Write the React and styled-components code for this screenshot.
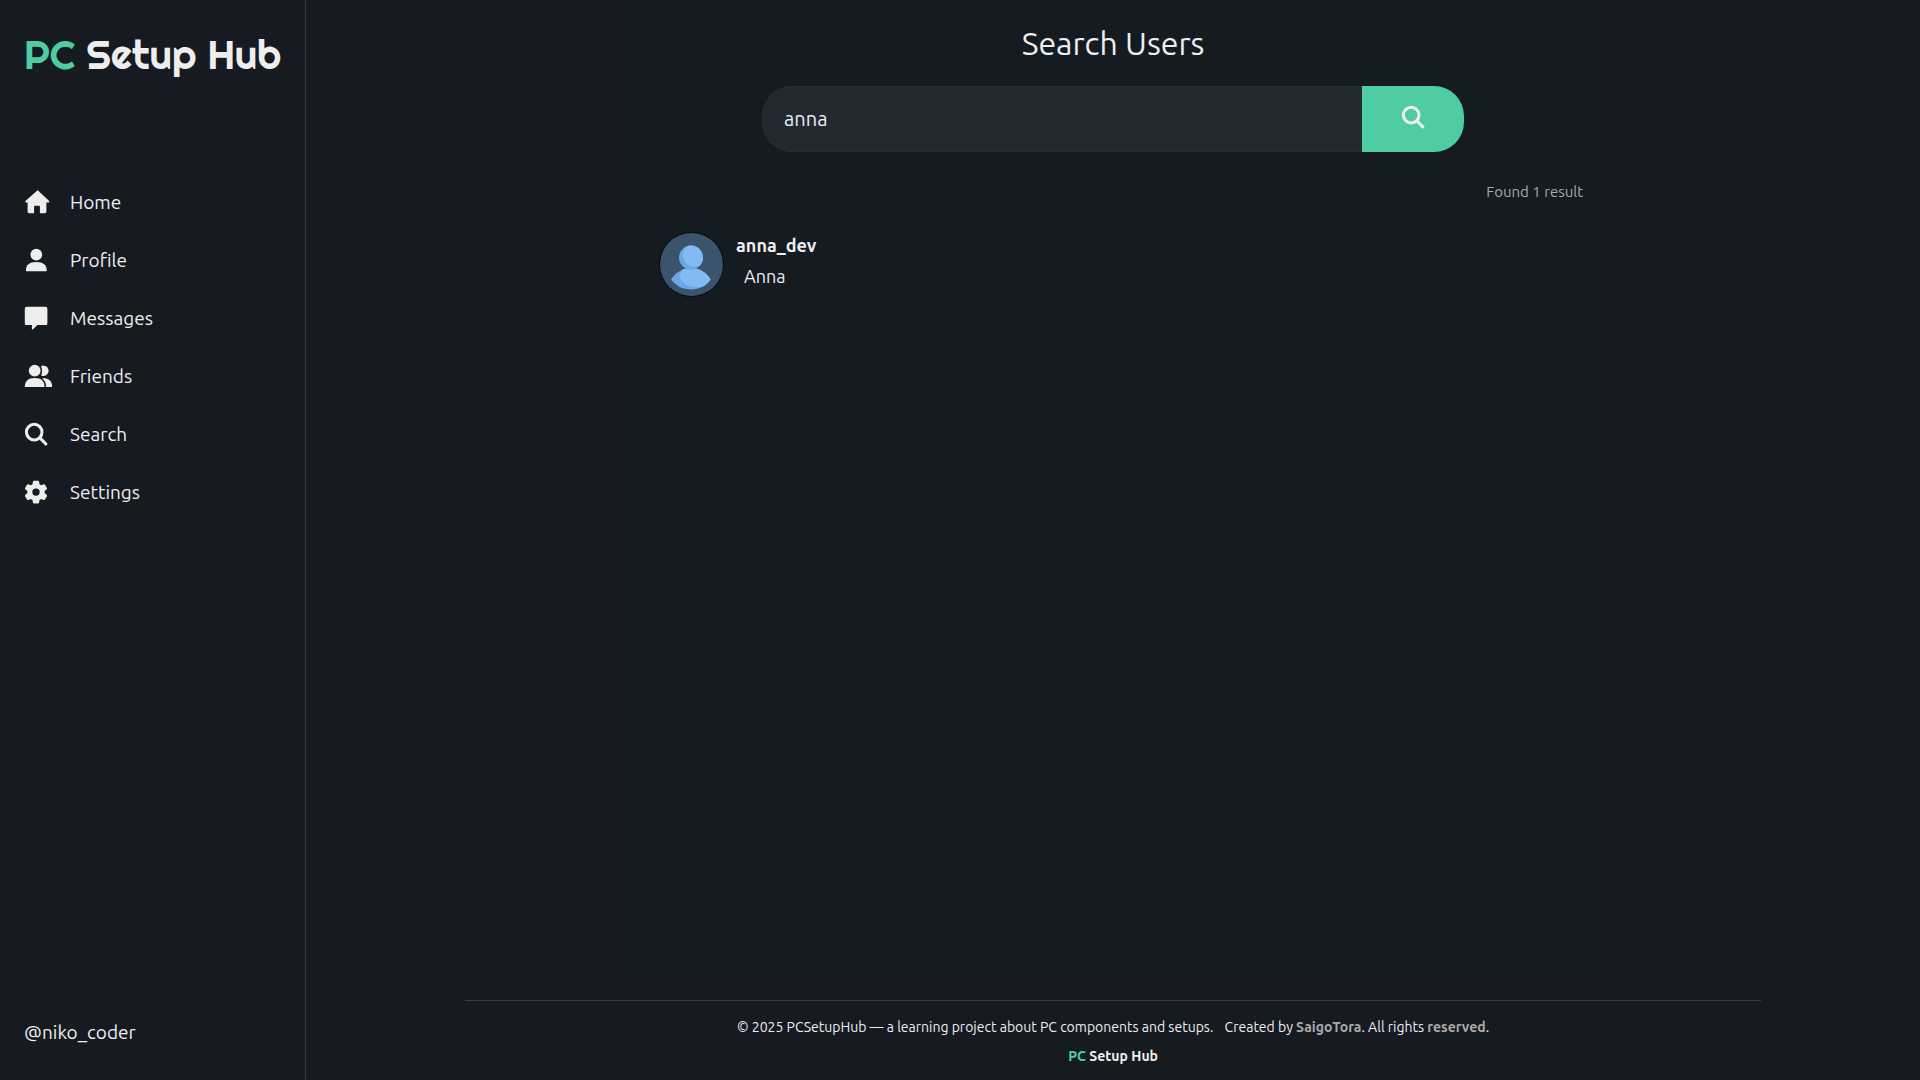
import React from 'react';
import styled, { createGlobalStyle } from 'styled-components';

const accent = '#4ecca3';
const text = '#eeeeee';
const line = '#393e46';
const muted = '#aaaaaa';

const GlobalStyle = createGlobalStyle`
  *, *::before, *::after { box-sizing: border-box; }
  body {
    margin: 0;
    background: #161a21;
    color: ${text};
    font-family: Ubuntu, "Noto Sans", "Open Sans", sans-serif;
    font-size: 19px;
    line-height: 24px;
  }
  a { color: inherit; text-decoration: none; }
  h1, p, ul { margin: 0; padding: 0; }
`;

const Page = styled.div`
  display: flex;
  min-height: 100vh;
`;

const Sidebar = styled.aside`
  display: flex;
  flex-direction: column;
  flex: 0 0 306px;
  padding: 25px 24px 36px;
  border-right: 1px solid ${line};
`;

const Logo = styled.a`
  font-family: Righteous, Lato, sans-serif;
  font-size: 40px;
  font-weight: 400;
  line-height: 60px;
  white-space: nowrap;
`;

const Accent = styled.span`
  color: ${accent};
`;

const NavList = styled.ul`
  display: flex;
  flex-direction: column;
  margin-top: 88px;
  list-style: none;
`;

const NavLink = styled.a`
  display: grid;
  grid-template-columns: 30px 1fr;
  column-gap: 16px;
  align-items: center;
  height: 58px;
`;

const Icon = styled.svg`
  display: block;
  width: 28px;
  height: 24px;
  fill: currentColor;
`;

const SearchGlyph = styled(Icon)`
  width: 24px;
`;

const Account = styled.a`
  margin-top: auto;
`;

const Content = styled.div`
  display: flex;
  flex: 1;
  flex-direction: column;
  align-items: center;
  min-width: 0;
  padding: 0 24px;
`;

const Panel = styled.main`
  display: flex;
  flex: 1;
  flex-direction: column;
  width: 100%;
  max-width: 972px;
  padding: 23px 16px;
  background: #141c22;
`;

const Title = styled.h1`
  font-size: 32px;
  font-weight: 400;
  line-height: 40px;
  text-align: center;
`;

const SearchForm = styled.form`
  display: flex;
  align-self: center;
  width: 100%;
  max-width: 702px;
  height: 66px;
  margin-top: 23px;
`;

const SearchInput = styled.input`
  flex: 1;
  min-width: 0;
  padding: 0 21px;
  border: 1px solid #292d35;
  border-right: 0;
  border-radius: 30px 0 0 30px;
  outline: 0;
  background: #232931;
  color: inherit;
  font: inherit;
  font-size: 20px;
`;

const SearchButton = styled.button`
  display: flex;
  align-items: center;
  justify-content: center;
  width: 102px;
  padding: 0 0 4px;
  border: 0;
  border-radius: 0 30px 30px 0;
  background: ${accent};
  color: ${text};
`;

const ResultCount = styled.p`
  margin-top: 28px;
  color: ${muted};
  font-size: 15px;
  text-align: right;
`;

const UserCard = styled.a`
  display: flex;
  gap: 12px;
  margin-top: 28px;
  padding: 0 16px;
`;

const Avatar = styled.svg`
  width: 65px;
  height: 65px;
`;

const UserText = styled.div`
  display: flex;
  flex-direction: column;
  gap: 7px;
  padding-top: 1px;
  font-size: 18px;
`;

const UserName = styled.strong`
  font-weight: 700;
`;

const FullName = styled.span`
  padding-left: 8px;
`;

const Footer = styled.footer`
  width: 100%;
  max-width: 1296px;
  margin-top: 24px;
  padding: 14px 0 12px;
  border-top: 1px solid ${line};
  font-size: 14px;
  text-align: center;
`;

const FooterLine = styled.p`
  padding-bottom: 5px;
`;

const Credit = styled.span`
  margin-left: 8px;
`;

const FooterLink = styled.a`
  color: ${muted};
  font-weight: 700;
`;

const FooterBrand = styled.a`
  font-weight: 700;
`;

const shapes = {
  home: (
    <path d="M14.3.7c-.4-.3-.9-.3-1.3 0L1.700 10.800c-.8.8-.4 1.800.7 1.800h1.200v9c0 1.100.6 1.700 1.600 1.700h4.900v-6.500c0-.7.4-1.100 1.100-1.100h3.600c.7 0 1.100.4 1.100 1.100v6.500h4.900c1 0 1.600-.6 1.600-1.700v-9h1.800c1.100 0 1.500-1 .7-1.800z" />
  ),
  profile: (
    <>
      <circle cx="12.300" cy="6.600" r="5.900" />
      <path d="M2.300 23.200c-.3 0-.4-.2-.4-.6 0-5.600 3.400-8.500 10.400-8.500s10.400 2.900 10.400 8.500c0 .4-.1.6-.4.600z" />
    </>
  ),
  messages: (
    <path d="M3 .8h18.200c1.500 0 2.200.7 2.200 2.200v13.900c0 1.500-.7 2.200-2.200 2.200H13.500l-4.800 4.300c-.5.300-.8.100-.8-.4v-3.900H3c-1.500 0-2.200-.7-2.200-2.200V3C.8 1.500 1.500.8 3 .8z" />
  ),
  friends: (
    <>
      <circle cx="10.700" cy="6.600" r="5.900" />
      <path d="M.8 23.100c0-5.900 3.200-9.100 9.900-9.100s9.900 3.200 9.900 9.100z" />
      <path d="M17 2.200a5.200 5.200 0 1 1 .1 9.300c1.300-2.800 1.300-6.500-.1-9.300z" />
      <path d="M18.200 14.400c6.200-.7 10 2.500 10 8.700h-6.100c0-3.700-1-6.700-3.900-8.700z" />
    </>
  ),
  search: (
    <path
      d="M10.200 2.300a7.800 7.800 0 1 0 0 15.600 7.800 7.800 0 0 0 0-15.600zM15.900 15.900l5.900 6"
      fill="none"
      stroke="currentColor"
      strokeWidth="3"
      strokeLinecap="round"
    />
  ),
  settings: (
    <path
      fillRule="evenodd"
      d="M10 .7h4c.6 0 1 .4 1.100 1l.4 2.500 1.700 1 2.400-.9c.6-.2 1.100 0 1.400.5l1.900 3.300c.3.500.2 1.100-.3 1.500l-2 1.500v2l2 1.600c.5.400.6 1 .3 1.500L21 19.400c-.3.500-.8.700-1.400.5l-2.400-.9-1.700 1-.4 2.500c-.1.600-.5.900-1.100.9h-4c-.6 0-1-.3-1.100-.9L8.500 20l-1.700-1-2.400.9c-.6.200-1.100 0-1.400-.5l-1.900-3.200c-.3-.5-.2-1.100.3-1.500l2-1.600v-2l-2-1.500c-.5-.4-.6-1-.3-1.500L3 4.800c.3-.5.8-.7 1.400-.5l2.400.9 1.700-1L8.900 1.700c.1-.6.5-1 1.100-1zM12 8.400a3.700 3.700 0 1 0 0 7.400 3.700 3.700 0 0 0 0-7.400z"
    />
  ),
};

function Glyph({ name }) {
  return (
    <Icon viewBox="0 0 28 24" aria-hidden="true">
      {shapes[name]}
    </Icon>
  );
}

function Portrait() {
  const body = 'M12 47.500C16.500 40.500 23.500 36 32 36s15.500 4.500 19.700 11.500C47 54 40.500 57.500 32 57.500S17 54 12 47.500z';
  return (
    <Avatar viewBox="0 0 65 65" aria-hidden="true">
      <defs>
        <clipPath id="bodyClip"><path d={body} /></clipPath>
        <clipPath id="headClip"><circle cx="32" cy="25.500" r="12" /></clipPath>
      </defs>
      <circle cx="32.500" cy="32.500" r="32" fill="#3b536b" stroke="#05080c" strokeWidth="1" />
      <path d={body} fill="#6ba7e5" />
      <ellipse cx="38" cy="43.500" rx="17" ry="11.500" fill="#82baf3" clipPath="url(#bodyClip)" />
      <circle cx="32" cy="25.500" r="12" fill="#6ba7e5" />
      <circle cx="36" cy="23" r="12" fill="#82baf3" clipPath="url(#headClip)" />
    </Avatar>
  );
}

const links = [
  ['home', 'Home'],
  ['profile', 'Profile'],
  ['messages', 'Messages'],
  ['friends', 'Friends'],
  ['search', 'Search'],
  ['settings', 'Settings'],
];

export default function App() {
  return (
    <>
      <GlobalStyle />
      <Page>
        <Sidebar>
          <Logo href="#home">
            <Accent>PC</Accent> Setup Hub
          </Logo>
          <nav>
            <NavList>
              {links.map(([icon, label]) => (
                <li key={icon}>
                  <NavLink href={`#${icon}`}>
                    <Glyph name={icon} />
                    {label}
                  </NavLink>
                </li>
              ))}
            </NavList>
          </nav>
          <Account href="#profile">@niko_coder</Account>
        </Sidebar>
        <Content>
          <Panel>
            <Title>Search Users</Title>
            <SearchForm role="search" onSubmit={(e) => e.preventDefault()}>
              <SearchInput type="text" aria-label="Search users" defaultValue="anna" />
              <SearchButton type="submit" aria-label="Search">
                <SearchGlyph viewBox="0 0 24 24" aria-hidden="true">
                  {shapes.search}
                </SearchGlyph>
              </SearchButton>
            </SearchForm>
            <ResultCount>Found 1 result</ResultCount>
            <UserCard href="#anna_dev">
              <Portrait />
              <UserText>
                <UserName>anna_dev</UserName>
                <FullName>Anna</FullName>
              </UserText>
            </UserCard>
          </Panel>
          <Footer>
            <FooterLine>
              © 2025 PCSetupHub — a learning project about PC components and setups.{' '}
              <Credit>
                Created by <FooterLink href="#author">SaigoTora</FooterLink>. All rights{' '}
                <FooterLink href="#license">reserved</FooterLink>.
              </Credit>
            </FooterLine>
            <FooterBrand href="#home">
              <Accent>PC</Accent> Setup Hub
            </FooterBrand>
          </Footer>
        </Content>
      </Page>
    </>
  );
}
